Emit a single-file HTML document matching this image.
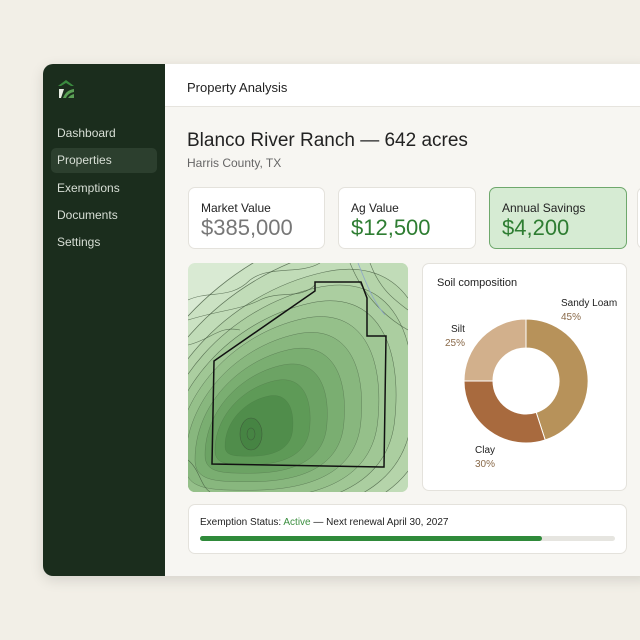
<!DOCTYPE html><html><head><style>
*{margin:0;padding:0;box-sizing:border-box}
body{width:640px;height:640px;background:#f2efe7;font-family:"Liberation Sans",sans-serif;position:relative;overflow:hidden}
.app{position:absolute;left:43px;top:64px;width:610px;height:512px;border-radius:10px;overflow:hidden;background:#f7f6f2;box-shadow:0 4px 14px rgba(0,0,0,.12)}
.side{position:absolute;left:0;top:0;width:122px;height:512px;background:#1b2d1d}
.nav{position:absolute;left:14px;font-size:12px;color:#d8dfd6}
.sel{position:absolute;left:8px;top:84px;width:106px;height:25px;background:#2c3f2e;border-radius:5px}
.head{position:absolute;left:122px;top:0;right:0;height:43px;background:#fff;border-bottom:1px solid #e6e4de}
.t{position:absolute;color:#222}
.card{position:absolute;background:#fff;border:1px solid #e4e2dc;border-radius:7px}
.lbl{position:absolute;left:12px;top:13px;font-size:12px;color:#222}
.val{position:absolute;left:12px;top:27px;font-size:22px}
</style></head><body>
<div class="app">
<div class="side">
<svg style="position:absolute;left:13px;top:14px" width="20" height="21" viewBox="0 0 20 21"><path d="M2 8 L10 2 L18 8 L15 8 L10 5 L5 8Z" fill="#3a8a3f"/><path d="M3 11 L8 11 L5 20 L3 20Z" fill="#e8ece4"/><path d="M7 20 Q10 12 18 11 L18 14 Q12 15 10 20Z" fill="#5aa055"/><path d="M12 20 Q14 17 18 16 L18 20Z" fill="#5aa055"/></svg>
<div class="nav" style="top:62px">Dashboard</div>
<div class="sel"></div>
<div class="nav" style="top:89px">Properties</div>
<div class="nav" style="top:117px">Exemptions</div>
<div class="nav" style="top:144px">Documents</div>
<div class="nav" style="top:171px">Settings</div>
</div>
<div class="head"><div class="t" style="left:22px;top:16px;font-size:13px">Property Analysis</div></div>
</div>
<div class="t" style="left:187px;top:130px;font-size:19px">Blanco River Ranch — 642 acres</div>
<div class="t" style="left:187px;top:156px;font-size:12px;color:#666">Harris County, TX</div>
<div class="card" style="left:188px;top:187px;width:137px;height:62px"><div class="lbl">Market Value</div><div class="val" style="color:#777">$385,000</div></div>
<div class="card" style="left:338px;top:187px;width:138px;height:62px"><div class="lbl">Ag Value</div><div class="val" style="color:#2e7d32">$12,500</div></div>
<div class="card" style="left:489px;top:187px;width:138px;height:62px;background:#d6ebd3;border-color:#6ea86c"><div class="lbl">Annual Savings</div><div class="val" style="color:#2e7d32">$4,200</div></div>
<div class="card" style="left:637px;top:187px;width:20px;height:62px"></div>
<div class="card" style="left:188px;top:263px;width:220px;height:229px;overflow:hidden;border:none">
<svg width="220" height="229" viewBox="188 263 220 229">
<defs><path id="b" d="M150 480 C150 380 230 300 320 280 C400 262 430 330 420 420 C410 500 330 520 250 520 C190 520 150 520 150 480Z"/></defs>
<rect x="188" y="263" width="220" height="229" fill="#d9ead3"/>
<g stroke="#3c5238" stroke-width=".6" stroke-opacity=".75">
<use href="#b" fill="#cbe2c3" transform="translate(250 435) scale(1.35) translate(-250 -435)"/>
<use href="#b" fill="#c1dcb8" transform="translate(250 435) scale(1.2) translate(-250 -435)"/>
<use href="#b" fill="#b5d4aa" transform="translate(250 435) scale(1.05) translate(-250 -435)"/>
<use href="#b" fill="#abcea0" transform="translate(250 435) scale(.95) translate(-250 -435)"/>
<use href="#b" fill="#a0c795" transform="translate(250 435) scale(.85) translate(-250 -435)"/>
<use href="#b" fill="#95c08a" transform="translate(250 435) scale(.75) translate(-250 -435)"/>
<use href="#b" fill="#88b77e" transform="translate(250 435) scale(.65) translate(-250 -435)"/>
<use href="#b" fill="#7aae71" transform="translate(250 435) scale(.55) translate(-250 -435)"/>
<use href="#b" fill="#6ca364" transform="translate(250 435) scale(.45) translate(-250 -435)"/>
<use href="#b" fill="#5e9a57" transform="translate(250 435) scale(.35) translate(-250 -435)"/>
<use href="#b" fill="#508d4b" transform="translate(250 435) scale(.25) translate(-250 -435)"/>
<ellipse cx="251" cy="434" rx="11" ry="16" fill="#468443"/>
<ellipse cx="251" cy="434" rx="4" ry="6" fill="none"/>
<path d="M188 300 C210 290 230 300 250 280 C270 265 300 275 320 263" fill="none"/>
<path d="M188 320 C220 310 240 310 260 300 C280 290 300 300 315 285" fill="none"/>
<path d="M188 345 C210 340 220 325 240 330" fill="none"/>
<path d="M370 263 C380 290 395 300 408 310" fill="none"/>
<path d="M350 263 C365 300 390 320 408 330" fill="none"/>
<path d="M188 460 C200 470 200 485 210 492" fill="none"/>
</g>
<path d="M358 263 C365 280 372 300 385 315" stroke="#8fa7c8" fill="none" stroke-width=".8"/>
<path d="M214 361 L315 291 L315 282 L361 282 L367 298 L367 336 L386 336 L384 467 L212 464 Z" fill="none" stroke="#111" stroke-width="1.5"/>
</svg></div>
<div class="card" style="left:422px;top:263px;width:205px;height:228px">
<div class="t" style="left:14px;top:13px;font-size:11px">Soil composition</div>
<div class="t" style="left:138px;top:34px;font-size:10px">Sandy Loam</div>
<div class="t" style="left:138px;top:48px;font-size:10px;color:#8a6a4a">45%</div>
<div class="t" style="left:28px;top:60px;font-size:10px">Silt</div>
<div class="t" style="left:22px;top:74px;font-size:10px;color:#8a6a4a">25%</div>
<div class="t" style="left:52px;top:181px;font-size:10px">Clay</div>
<div class="t" style="left:52px;top:195px;font-size:10px;color:#8a6a4a">30%</div>
<svg style="position:absolute;left:0;top:0" width="205" height="228">
<g transform="translate(103 117)" stroke="#fff" stroke-width="1">
<path d="M0 -62 A62 62 0 0 1 19.2 59 L10.2 31.4 A33 33 0 0 0 0 -33Z" fill="#b7925a"/>
<path d="M19.2 59 A62 62 0 0 1 -62 0 L-33 0 A33 33 0 0 0 10.2 31.4Z" fill="#a86a3e"/>
<path d="M-62 0 A62 62 0 0 1 0 -62 L0 -33 A33 33 0 0 0 -33 0Z" fill="#d2b08c"/>
</g></svg>
</div>
<div class="card" style="left:188px;top:504px;width:439px;height:50px">
<div class="t" style="left:11px;top:12px;font-size:10px">Exemption Status: <span style="color:#3b8e3f">Active</span> — Next renewal April 30, 2027</div>
<div style="position:absolute;left:11px;top:31px;width:415px;height:5px;background:#e6e5e0;border-radius:3px"><div style="width:342px;height:5px;background:#2f8a3a;border-radius:3px"></div></div>
</div>
</body></html>
